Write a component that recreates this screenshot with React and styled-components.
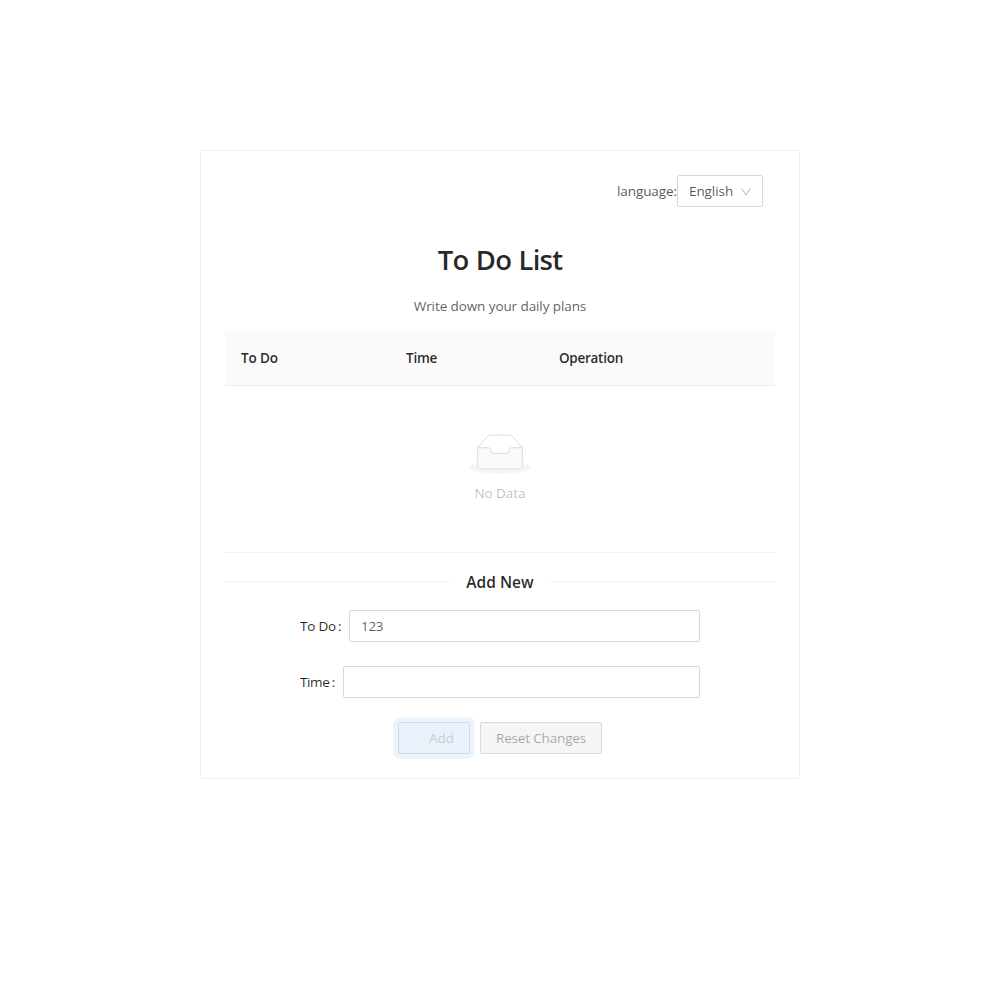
import React from "react";
import styled, { createGlobalStyle } from "styled-components";

const GlobalStyle = createGlobalStyle`
  *, *::before, *::after { box-sizing: border-box; }
  body {
    margin: 0;
    background: #fff;
    color: rgba(0, 0, 0, 0.85);
    font: 400 13.5px/22px "Open Sans", "Noto Sans", sans-serif;
  }
`;

const Page = styled.main`
  display: flex;
  justify-content: center;
  padding-top: 150px;
`;

const Card = styled.section`
  width: 600px;
  height: 629px;
  padding: 24px;
  border: 1px solid #f0f0f0;
  border-radius: 2px;
`;

const Text = styled.span`
  letter-spacing: ${(p) => p.$track || 0}px;
  white-space: nowrap;
`;

const LanguageBar = styled.div`
  display: flex;
  justify-content: flex-end;
  align-items: center;
  height: 32px;
  margin-right: 12px;
  color: rgba(0, 0, 0, 0.68);
`;

const Select = styled.div`
  display: flex;
  align-items: center;
  justify-content: space-between;
  width: 86px;
  height: 32px;
  padding: 0 10px 0 11px;
  border: 1px solid #d9d9d9;
  border-radius: 2px;
`;

const Chevron = styled.svg`
  margin-top: 1px;
`;

const Title = styled.h1`
  margin: 34px 0 0;
  font-size: 27.5px;
  font-weight: 600;
  line-height: 38px;
  letter-spacing: -0.75px;
  word-spacing: 0.9px;
  text-align: center;
`;

const Subtitle = styled.p`
  margin: 16px 0 14px;
  text-align: center;
  color: rgba(0, 0, 0, 0.66);
`;

const TableHead = styled.div`
  display: grid;
  grid-template-columns: 165px 153px 1fr;
  align-items: center;
  height: 55px;
  padding-left: 16px;
  background: #fafafa;
  border-bottom: 1px solid #f0f0f0;
  border-radius: 2px 2px 0 0;
  font-weight: 600;
`;

const Empty = styled.div`
  display: flex;
  flex-direction: column;
  align-items: center;
  height: 167px;
  padding-top: 48px;
  border-bottom: 1px solid #f0f0f0;
  color: rgba(0, 0, 0, 0.27);
`;

const EmptyLabel = styled(Text)`
  margin-top: 8px;
`;

const Divider = styled.h2`
  display: flex;
  align-items: center;
  gap: 16px;
  margin: 16px 0 15px;
  font-size: 15.5px;
  font-weight: 600;
  line-height: 26px;

  &::before,
  &::after {
    content: "";
    flex: 1;
    height: 2px;
    margin-bottom: 1px;
    background: #f7f7f7;
  }
`;

const Form = styled.form`
  display: flex;
  flex-direction: column;
  gap: 24px;
  width: 400px;
  margin: 0 auto;
`;

const Field = styled.label`
  display: flex;
  align-items: center;
`;

const FieldLabel = styled.span`
  display: flex;
  flex: 0 0 ${(p) => p.$width}px;
`;

const Colon = styled.span`
  margin-left: ${(p) => p.$gap}px;
`;

const Input = styled.input`
  flex: 1;
  min-width: 0;
  height: 32px;
  padding: 4px 11px;
  border: 1px solid #d9d9d9;
  border-radius: 2px;
  background: #fff;
  color: rgba(0, 0, 0, 0.65);
  font: inherit;
  letter-spacing: -0.3px;
  outline: none;
`;

const Actions = styled.div`
  display: flex;
  justify-content: center;
  gap: 10px;
`;

const Button = styled.button`
  display: flex;
  align-items: center;
  justify-content: center;
  width: 122px;
  height: 32px;
  padding: 0;
  border: 1px solid #d9d9d9;
  border-radius: 2px;
  background: #f5f5f5;
  color: rgba(0, 0, 0, 0.34);
  font: inherit;
`;

const LoadingButton = styled(Button)`
  justify-content: flex-end;
  width: 72px;
  padding-right: 15px;
  border-color: #cddce8;
  background: #eaf1fa;
  color: #c8ced6;
  box-shadow: 0 0 0 4.5px #eaf4ff;
`;

const Spinner = styled.svg`
  margin-right: 3px;
`;

function ChevronDown() {
  return (
    <Chevron width="12" height="12" viewBox="64 64 896 896" fill="#bfbfbf">
      <path d="M884 256h-75c-5.1 0-9.9 2.500-12.900 6.600L512 654.200 227.900 262.600c-3-4.100-7.800-6.600-12.900-6.600h-75c-6.500 0-10.300 7.400-6.500 12.700l352.600 486.100c12.800 17.600 39 17.600 51.700 0l352.600-486.100c3.900-5.300.1-12.700-6.400-12.700z" />
    </Chevron>
  );
}

function EmptyBox() {
  return (
    <svg width="62" height="40" viewBox="0 0 64 41">
      <g transform="translate(0 1)" fill="none" fillRule="evenodd">
        <ellipse fill="#f5f5f5" cx="32" cy="33" rx="32" ry="7" />
        <g fillRule="nonzero" stroke="#d9d9d9">
          <path d="M55 12.760L44.854 1.258C44.367.474 43.656 0 42.907 0H21.093c-.749 0-1.460.474-1.947 1.257L9 12.761V22h46v-9.240z" />
          <path fill="#fafafa" d="M41.613 15.931c0-1.605.994-2.930 2.227-2.931H55v18.137C55 33.260 53.680 35 52.050 35h-40.100C10.320 35 9 33.259 9 31.137V13h11.160c1.233 0 2.227 1.323 2.227 2.928v.022c0 1.605 1.005 2.901 2.237 2.901h14.752c1.232 0 2.237-1.308 2.237-2.913v-.007z" />
        </g>
      </g>
    </svg>
  );
}

export default function App() {
  return (
    <>
      <GlobalStyle />
      <Page>
        <Card>
          <LanguageBar>
            <Text $track={-0.08}>language:</Text>
            <Select>
              <Text $track={-0.08}>English</Text>
              <ChevronDown />
            </Select>
          </LanguageBar>
          <Title>To Do List</Title>
          <Subtitle>
            <Text $track={-0.09}>Write down your daily plans</Text>
          </Subtitle>
          <TableHead>
            <Text $track={-0.1}>To Do</Text>
            <Text $track={-0.25}>Time</Text>
            <Text $track={-0.27}>Operation</Text>
          </TableHead>
          <Empty>
            <EmptyBox />
            <EmptyLabel $track={-0.06}>No Data</EmptyLabel>
          </Empty>
          <Divider>Add New</Divider>
          <Form>
            <Field>
              <FieldLabel $width={49}>
                <Text $track={-0.2}>To Do</Text>
                <Colon $gap={2}>:</Colon>
              </FieldLabel>
              <Input defaultValue="123" />
            </Field>
            <Field>
              <FieldLabel $width={43}>
                <Text $track={-0.4}>Time</Text>
                <Colon $gap={2.5}>:</Colon>
              </FieldLabel>
              <Input />
            </Field>
            <Actions>
              <LoadingButton type="button">
                <Spinner width="14" height="14" viewBox="0 0 14 14" fill="none">
                  <path d="M10.500 6Q10.200 9 8.500 11" stroke="#f4f7fb" />
                </Spinner>
                <Text>Add</Text>
              </LoadingButton>
              <Button type="button">
                <Text $track={-0.16}>Reset Changes</Text>
              </Button>
            </Actions>
          </Form>
        </Card>
      </Page>
    </>
  );
}
